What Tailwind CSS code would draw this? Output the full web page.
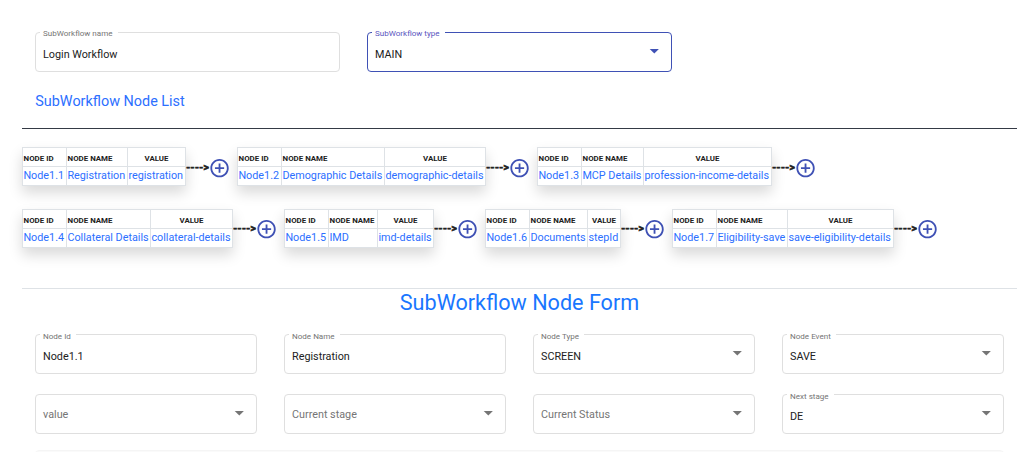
<!DOCTYPE html>
<html lang="en">
<head>
<meta charset="utf-8">
<title>SubWorkflow</title>
<script src="https://cdn.jsdelivr.net/npm/@tailwindcss/browser@4"></script>
</head>
<body class="h-[452px] overflow-hidden bg-white font-['Roboto',sans-serif] text-[#212121]">
<main class="flex flex-col pl-[22px] pr-[7px] pt-8">
  <section class="flex gap-[27px] pl-[13px]" data-fields="top"></section>
  <h2 class="mt-[20px] h-5 pl-[13.3px] text-[14.4px] leading-5 text-[#2c6fff]">SubWorkflow Node List</h2>
  <div class="mt-[16px] h-px bg-[#343a45]"></div>
  <section class="mt-[18px] flex h-[62px]" data-nodes="0"></section>
  <section class="flex h-[62px]" data-nodes="1"></section>
  <div class="mt-[17px] h-px bg-[#dee2e6]"></div>
  <h1 class="h-[45px] text-center text-[21.6px] leading-[27px] text-[#1976ff]">SubWorkflow Node Form</h1>
  <section class="grid grid-cols-[222px_222px_222px_222px] gap-x-[27px] gap-y-5 pl-[13px]" data-fields="form"></section>
  <div class="ml-[13px] mr-[13px] mt-4 h-4 rounded border border-[#f5f5f5] bg-[#fafafa]"></div>
</main>
<script>
const fields = {
  top: [["SubWorkflow name", "Login Workflow", 0, 305], ["SubWorkflow type", "MAIN", 1, 305, 1]],
  form: [["Node Id", "Node1.1", 0], ["Node Name", "Registration", 0], ["Node Type", "SCREEN", 1], ["Node Event", "SAVE", 1],
    ["", "value", 1], ["", "Current stage", 1], ["", "Current Status", 1], ["Next stage", "DE", 1]]
};
for (const key in fields) {
  document.querySelector(`[data-fields=${key}]`).innerHTML = fields[key].map(([label, value, select, width, focus]) => `
  <div class="relative flex h-10 items-center rounded border px-[7px] ${focus ? 'border-[#3f51b5]' : 'border-[#dfdfdf]'}" style="width:${width || 222}px">
    ${label ? `<span class="absolute left-1 ${key === 'top' ? '-top-[4px]' : '-top-[3px]'} bg-white pl-[3px] pr-[5px] text-[8.05px] leading-[10px] whitespace-nowrap ${focus ? 'text-[#5a55c0]' : 'text-[#757575]'}">${label}</span>` : ''}
    <span class="text-[10.8px] leading-4 ${label ? 'pt-[6px] text-[#212121]' : 'pt-[2px] text-[#757575]'}">${value}</span>
    ${select ? `<svg class="mb-px ml-auto mr-[5px] h-[5px] w-[10px] ${focus ? 'fill-[#3f51b5]' : 'fill-[#757575]'}" viewBox="0 0 10 5"><path d="M0.7 0h9.2L5.3 4.6z"/></svg>` : ''}
  </div>`).join('');
}
const rows = [
  [["Node1.1", "Registration", "registration", 61, 58], ["Node1.2", "Demographic Details", "demographic-details", 103, 101], ["Node1.3", "MCP Details", "profession-income-details", 62, 128]],
  [["Node1.4", "Collateral Details", "collateral-details", 84, 82], ["Node1.5", "IMD", "imd-details", 49, 56], ["Node1.6", "Documents", "stepId", 58, 33], ["Node1.7", "Eligibility-save", "save-eligibility-details", 71, 106]]
];
rows.forEach((row, i) => {
  document.querySelector(`[data-nodes="${i}"]`).innerHTML = row.map(([id, name, value, w1, w2]) => `
  <div class="flex items-start">
    <div class="grid h-[39px] grid-rows-[19px_19px] border-t border-l border-[#dee2e6] bg-white shadow-[0_7px_14px_rgba(0,0,0,0.15)]" style="grid-template-columns:44px ${w1}px ${w2}px">
      <b class="border-r border-b border-[#dee2e6] pl-[0.6px] pt-[3px] text-[7.9px] leading-4 whitespace-nowrap">NODE ID</b>
      <b class="border-r border-b border-[#dee2e6] pl-[0.6px] pt-[3px] text-[7.9px] leading-4 whitespace-nowrap">NODE NAME</b>
      <b class="border-r border-b border-[#dee2e6] pt-[3px] text-center text-[7.9px] leading-4">VALUE</b>
      <span class="border-r border-b border-[#dee2e6] pl-[0.4px] text-[10.8px] leading-[18px] whitespace-nowrap text-[#2c6fff]">${id}</span>
      <span class="border-r border-b border-[#dee2e6] pl-[0.4px] text-[10.8px] leading-[18px] whitespace-nowrap text-[#2c6fff]">${name}</span>
      <span class="border-r border-b border-[#dee2e6] pl-[0.4px] text-[10.8px] leading-[18px] whitespace-nowrap text-[#2c6fff]">${value}</span>
    </div>
    <div class="flex w-[51px] items-center ${i ? 'pt-[9px]' : 'pt-[10px]'}">
      <b class="w-[23px] text-[11px] leading-[22px] whitespace-nowrap [-webkit-text-stroke:0.5px_#212121]">----&gt;</b>
      <svg class="h-[22px] w-[22px] shrink-0 fill-[#3f51b5]" viewBox="0.5 -0.2 24 24"><path d="M13 7h-2v4H7v2h4v4h2v-4h4v-2h-4V7zm-1-5C6.48 2 2 6.48 2 12s4.48 10 10 10 10-4.48 10-10S17.52 2 12 2zm0 18c-4.41 0-8-3.59-8-8s3.59-8 8-8 8 3.59 8 8-3.59 8-8 8z"/></svg>
    </div>
  </div>`).join('');
});
</script>
</body>
</html>
